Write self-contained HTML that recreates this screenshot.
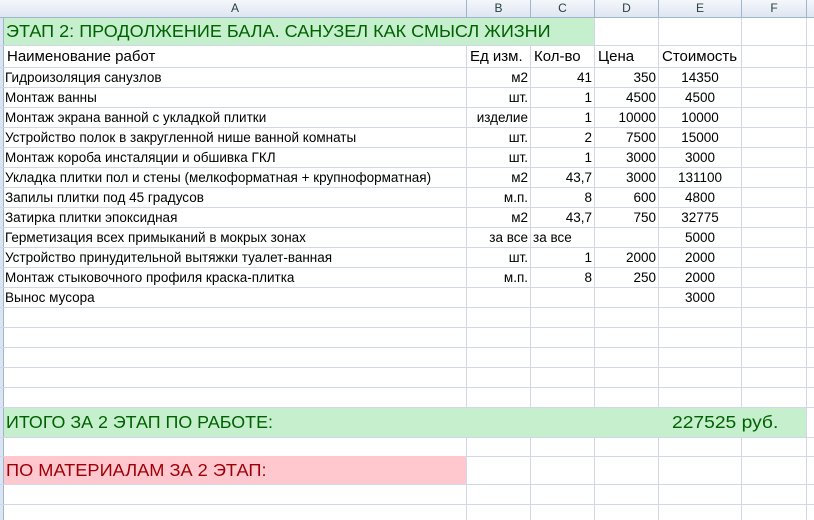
<!DOCTYPE html>
<html><head><meta charset="utf-8"><style>
body{margin:0;width:814px;height:520px;overflow:hidden;background:#fff;font-family:"Liberation Sans","DejaVu Sans",sans-serif;position:relative}
.hl{position:absolute;left:0;width:814px;height:1px;background:#d0d7e5}
.vl{position:absolute;top:0;width:1px;height:520px;background:#d0d7e5}
.t{position:absolute;font-size:13.5px;color:#000;white-space:nowrap;line-height:20px}
.r{text-align:right}.c{text-align:center}
#hdr{position:absolute;left:0;top:0;width:814px;height:17px;background:linear-gradient(#f4f7fb,#dfe6f1);border-bottom:1px solid #9eb6ce}
.h{position:absolute;top:0;height:17px;line-height:17px;font-size:12px;color:#27413e;text-align:center;border-right:1px solid #9eb6ce}
</style></head><body>
<div style="position:absolute;left:0;top:0;width:3px;height:520px;background:#dbe5f1;border-right:1px solid #9eb6ce"></div>
<div class="vl" style="left:466px;top:45px;height:475px"></div>
<div class="vl" style="left:530px;top:45px;height:475px"></div>
<div class="vl" style="left:594px;top:17px;height:503px"></div>
<div class="vl" style="left:658px"></div>
<div class="vl" style="left:741px"></div>
<div class="vl" style="left:806px"></div>
<div class="hl" style="top:45px"></div>
<div class="hl" style="top:67px"></div>
<div class="hl" style="top:87px"></div>
<div class="hl" style="top:107px"></div>
<div class="hl" style="top:127px"></div>
<div class="hl" style="top:147px"></div>
<div class="hl" style="top:167px"></div>
<div class="hl" style="top:187px"></div>
<div class="hl" style="top:207px"></div>
<div class="hl" style="top:227px"></div>
<div class="hl" style="top:247px"></div>
<div class="hl" style="top:267px"></div>
<div class="hl" style="top:287px"></div>
<div class="hl" style="top:307px"></div>
<div class="hl" style="top:327px"></div>
<div class="hl" style="top:347px"></div>
<div class="hl" style="top:367px"></div>
<div class="hl" style="top:387px"></div>
<div class="hl" style="top:407px"></div>
<div class="hl" style="top:437px"></div>
<div class="hl" style="top:456px"></div>
<div class="hl" style="top:484px"></div>
<div class="hl" style="top:504px"></div>
<div style="position:absolute;left:4px;top:18px;width:590px;height:27px;background:#c6efce"></div>
<div style="position:absolute;left:4px;top:408px;width:802px;height:29px;background:#c6efce"></div>
<div style="position:absolute;left:4px;top:456px;width:462px;height:28px;background:#ffc7ce"></div>
<div id="hdr">
<div class="h" style="left:4px;width:462px">A</div>
<div class="h" style="left:467px;width:63px">B</div>
<div class="h" style="left:531px;width:63px">C</div>
<div class="h" style="left:595px;width:63px">D</div>
<div class="h" style="left:659px;width:82px">E</div>
<div class="h" style="left:742px;width:64px">F</div>
</div>
<div class="t" style="left:6px;top:18px;line-height:27px;font-size:17.5px;color:#006100;transform:scaleX(1.03);transform-origin:left">ЭТАП 2: ПРОДОЛЖЕНИЕ БАЛА. САНУЗЕЛ КАК СМЫСЛ ЖИЗНИ</div>
<div class="t" style="left:7px;top:46px;line-height:22px;font-size:15px">Наименование работ</div>
<div class="t" style="left:470px;top:46px;line-height:22px;font-size:15px">Ед изм.</div>
<div class="t" style="left:534px;top:46px;line-height:22px;font-size:15px">Кол-во</div>
<div class="t" style="left:598px;top:46px;line-height:22px;font-size:15px">Цена</div>
<div class="t" style="left:662px;top:46px;line-height:22px;font-size:15px">Стоимость</div>
<div class="t" style="left:6px;top:408px;line-height:29px;font-size:17.5px;color:#006100;transform:scaleX(1.02);transform-origin:left">ИТОГО ЗА 2 ЭТАП ПО РАБОТЕ:</div>
<div class="t" style="left:672px;top:408px;line-height:29px;font-size:17.5px;color:#006100;transform:scaleX(1.1);transform-origin:left">227525 руб.</div>
<div class="t" style="left:6px;top:456px;line-height:28px;font-size:17.5px;color:#9c0006;transform:scaleX(1.04);transform-origin:left">ПО МАТЕРИАЛАМ ЗА 2 ЭТАП:</div>

<div class="t" style="left:5px;top:68px">Гидроизоляция санузлов</div>
<div class="t r" style="left:467px;width:61px;top:68px">м2</div><div class="t r" style="left:531px;width:61px;top:68px">41</div><div class="t r" style="left:595px;width:61px;top:68px">350</div><div class="t c" style="left:659px;width:82px;top:68px">14350</div>
<div class="t" style="left:5px;top:88px">Монтаж ванны</div>
<div class="t r" style="left:467px;width:61px;top:88px">шт.</div><div class="t r" style="left:531px;width:61px;top:88px">1</div><div class="t r" style="left:595px;width:61px;top:88px">4500</div><div class="t c" style="left:659px;width:82px;top:88px">4500</div>
<div class="t" style="left:5px;top:108px">Монтаж экрана ванной с укладкой плитки</div>
<div class="t r" style="left:467px;width:61px;top:108px">изделие</div><div class="t r" style="left:531px;width:61px;top:108px">1</div><div class="t r" style="left:595px;width:61px;top:108px">10000</div><div class="t c" style="left:659px;width:82px;top:108px">10000</div>
<div class="t" style="left:5px;top:128px">Устройство полок в закругленной нише ванной комнаты</div>
<div class="t r" style="left:467px;width:61px;top:128px">шт.</div><div class="t r" style="left:531px;width:61px;top:128px">2</div><div class="t r" style="left:595px;width:61px;top:128px">7500</div><div class="t c" style="left:659px;width:82px;top:128px">15000</div>
<div class="t" style="left:5px;top:148px">Монтаж короба инсталяции и обшивка ГКЛ</div>
<div class="t r" style="left:467px;width:61px;top:148px">шт.</div><div class="t r" style="left:531px;width:61px;top:148px">1</div><div class="t r" style="left:595px;width:61px;top:148px">3000</div><div class="t c" style="left:659px;width:82px;top:148px">3000</div>
<div class="t" style="left:5px;top:168px">Укладка плитки пол и стены (мелкоформатная + крупноформатная)</div>
<div class="t r" style="left:467px;width:61px;top:168px">м2</div><div class="t r" style="left:531px;width:61px;top:168px">43,7</div><div class="t r" style="left:595px;width:61px;top:168px">3000</div><div class="t c" style="left:659px;width:82px;top:168px">131100</div>
<div class="t" style="left:5px;top:188px">Запилы плитки под 45 градусов</div>
<div class="t r" style="left:467px;width:61px;top:188px">м.п.</div><div class="t r" style="left:531px;width:61px;top:188px">8</div><div class="t r" style="left:595px;width:61px;top:188px">600</div><div class="t c" style="left:659px;width:82px;top:188px">4800</div>
<div class="t" style="left:5px;top:208px">Затирка плитки эпоксидная</div>
<div class="t r" style="left:467px;width:61px;top:208px">м2</div><div class="t r" style="left:531px;width:61px;top:208px">43,7</div><div class="t r" style="left:595px;width:61px;top:208px">750</div><div class="t c" style="left:659px;width:82px;top:208px">32775</div>
<div class="t" style="left:5px;top:228px">Герметизация всех примыканий в мокрых зонах</div>
<div class="t r" style="left:467px;width:61px;top:228px">за все</div><div class="t" style="left:533px;top:228px">за все</div><div class="t c" style="left:659px;width:82px;top:228px">5000</div>
<div class="t" style="left:5px;top:248px">Устройство принудительной вытяжки туалет-ванная</div>
<div class="t r" style="left:467px;width:61px;top:248px">шт.</div><div class="t r" style="left:531px;width:61px;top:248px">1</div><div class="t r" style="left:595px;width:61px;top:248px">2000</div><div class="t c" style="left:659px;width:82px;top:248px">2000</div>
<div class="t" style="left:5px;top:268px">Монтаж стыковочного профиля краска-плитка</div>
<div class="t r" style="left:467px;width:61px;top:268px">м.п.</div><div class="t r" style="left:531px;width:61px;top:268px">8</div><div class="t r" style="left:595px;width:61px;top:268px">250</div><div class="t c" style="left:659px;width:82px;top:268px">2000</div>
<div class="t" style="left:5px;top:288px">Вынос мусора</div>
<div class="t c" style="left:659px;width:82px;top:288px">3000</div>
</body></html>
